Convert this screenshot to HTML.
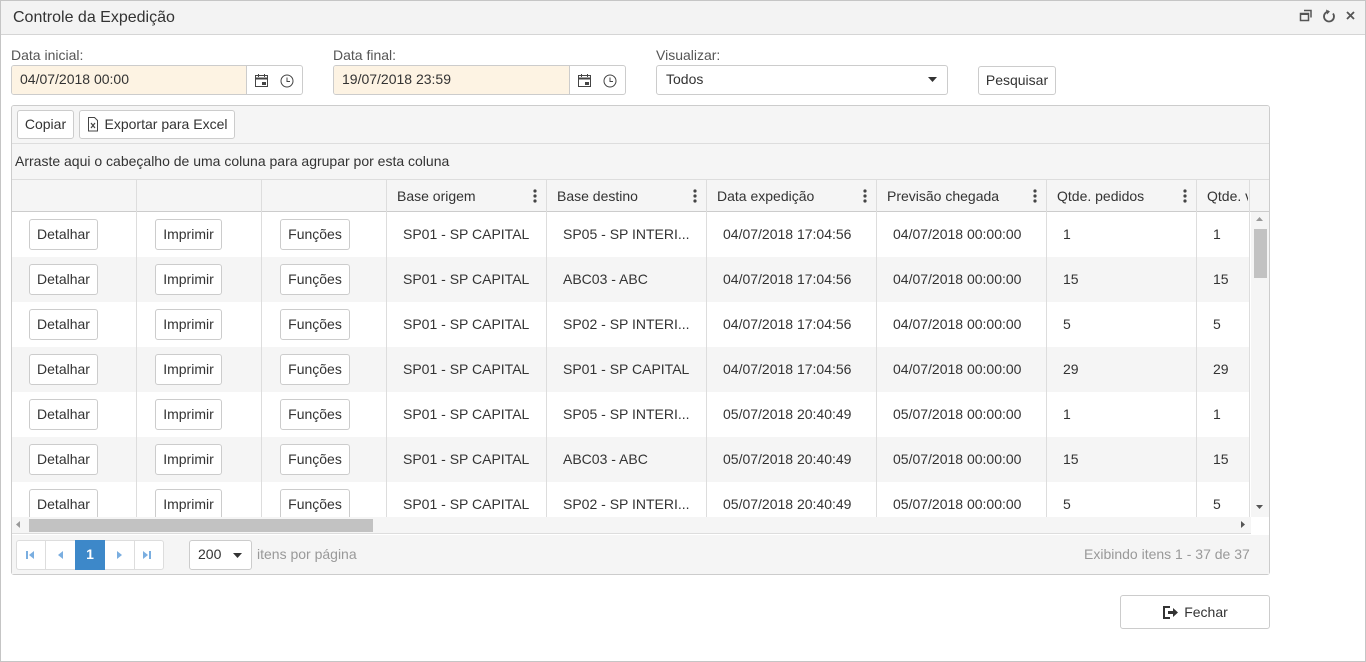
<!DOCTYPE html><html><head><meta charset="utf-8"><style>
*{box-sizing:border-box;margin:0;padding:0}
body{width:1366px;height:662px;font-family:"Liberation Sans",sans-serif;font-size:14px;color:#333;background:#fff;position:relative;overflow:hidden}
.abs{position:absolute}
.win{left:0;top:0;width:1366px;height:662px;border:1px solid #c5c5c5}
.title{left:1px;top:1px;width:1364px;height:34px;background:#f3f3f3;border-bottom:1px solid #d5d5d5;font-size:16px;padding:8px 0 0 12px;color:#333}
.lbl{font-size:14px;color:#555}
.inp{height:30px;border:1px solid #ccc;border-radius:3px;overflow:hidden}
.inp .v{position:absolute;left:0;top:0;bottom:0;background:#fdf3e3;padding:6px 0 0 8px;border-right:1px solid #ccc}
.btn{border:1px solid #ccc;border-radius:3px;background:#fff;text-align:center;font-size:14px;color:#333}
.grid{left:11px;top:105px;width:1259px;height:470px;border:1px solid #ccc;border-radius:3px;overflow:hidden;background:#fff}
.cell{position:absolute;font-size:14px;color:#333;white-space:nowrap}
</style></head><body>
<div class="abs win"></div>
<div class="abs title">Controle da Expedição</div>
<svg class="abs" style="left:1298px;top:8px" width="60" height="16" viewBox="0 0 60 16">
<rect x="2.5" y="5.5" width="8" height="7" fill="none" stroke="#555" stroke-width="1.5"/><rect x="2" y="5" width="9" height="2" fill="#555"/><path d="M6 2.5h7v7" fill="none" stroke="#555" stroke-width="1.5"/>
<path d="M31 3.5a5 5 0 1 0 4 2" fill="none" stroke="#555" stroke-width="1.8"/><path d="M28 1.5l4 2-3 3z" fill="#555"/>
<path d="M49 4l7 7M56 4l-7 7" stroke="#555" stroke-width="1.8"/></svg>

<div class="abs lbl" style="left:11px;top:47px">Data inicial:</div>
<div class="abs lbl" style="left:333px;top:47px">Data final:</div>
<div class="abs lbl" style="left:656px;top:47px">Visualizar:</div>
<div class="abs inp" style="left:11px;top:65px;width:292px"><div class="v" style="width:235px;padding-top:5px">04/07/2018 00:00</div>
<svg class="abs" style="left:241px;top:6px" width="50" height="18"><rect x="2.5" y="3.5" width="12" height="11" fill="none" stroke="#444"/><path d="M3 6.5h11" stroke="#444" stroke-width="2"/><rect x="9" y="10" width="4" height="3" fill="#444"/><path d="M5.5 2v3M11.5 2v3" stroke="#444"/><circle cx="34" cy="9" r="6" fill="none" stroke="#444"/><path d="M34 5.5v4h3" fill="none" stroke="#444"/></svg></div>
<div class="abs inp" style="left:333px;top:65px;width:293px"><div class="v" style="width:236px;padding-top:5px">19/07/2018 23:59</div>
<svg class="abs" style="left:242px;top:6px" width="50" height="18"><rect x="2.5" y="3.5" width="12" height="11" fill="none" stroke="#444"/><path d="M3 6.5h11" stroke="#444" stroke-width="2"/><rect x="9" y="10" width="4" height="3" fill="#444"/><path d="M5.5 2v3M11.5 2v3" stroke="#444"/><circle cx="34" cy="9" r="6" fill="none" stroke="#444"/><path d="M34 5.5v4h3" fill="none" stroke="#444"/></svg></div>
<div class="abs inp" style="left:656px;top:65px;width:292px;padding:5px 0 0 9px">Todos<svg class="abs" style="left:271px;top:11px" width="10" height="6"><path d="M0 0h9l-4.5 5z" fill="#333"/></svg></div>
<div class="abs btn" style="left:978px;top:66px;width:78px;height:29px;padding-top:5px">Pesquisar</div>

<div class="abs grid">
<div class="abs" style="left:0;top:0;width:1259px;height:38px;background:#f5f5f5;border-bottom:1px solid #ddd"></div>
<div class="abs btn" style="left:5px;top:4px;width:57px;height:29px;padding-top:5px">Copiar</div>
<div class="abs btn" style="left:67px;top:4px;width:156px;height:29px;padding-top:5px;padding-left:18px">Exportar para Excel<svg class="abs" style="left:7px;top:6px" width="12" height="15"><path d="M1.5 .5h6l3 3v10.5h-9z" fill="#fff" stroke="#444"/><path d="M4 6l4 5M8 6l-4 5" stroke="#444" stroke-width="1.2"/></svg></div>
<div class="abs" style="left:0;top:38px;width:1259px;height:36px;background:#f5f5f5;border-bottom:1px solid #ddd;padding:9px 0 0 3px;font-size:14px">Arraste aqui o cabeçalho de uma coluna para agrupar por esta coluna</div>
<div class="abs" style="left:0;top:74px;width:1259px;height:32px;background:#f5f5f5;border-bottom:1px solid #ccc"></div>
<div id="g"></div>
</div>

<script>
var g=document.getElementById('g'),h='';
var xs=[0,125,250,375,535,695,865,1035,1185,1238];
var hd=['','','','Base origem','Base destino','Data expedição','Previsão chegada','Qtde. pedidos','Qtde. v'];
for(var i=0;i<9;i++){var w=xs[i+1]-xs[i];
h+='<div class="abs" style="left:'+xs[i]+'px;top:74px;width:'+w+'px;height:32px;border-right:1px solid #ddd"></div>';
if(hd[i]){h+='<div class="cell" style="left:'+(xs[i]+10)+'px;top:82px;width:'+(w-12)+'px;overflow:hidden">'+hd[i]+'</div>';
if(i<8)h+='<svg class="abs" style="left:'+(xs[i]+w-14)+'px;top:82px" width="4" height="16"><circle cx="2" cy="3" r="1.6" fill="#444"/><circle cx="2" cy="8" r="1.6" fill="#444"/><circle cx="2" cy="13" r="1.6" fill="#444"/></svg>';}}
var rows=[['SP05 - SP INTERI...','04/07/2018 17:04:56','1'],['ABC03 - ABC','04/07/2018 17:04:56','15'],['SP02 - SP INTERI...','04/07/2018 17:04:56','5'],['SP01 - SP CAPITAL','04/07/2018 17:04:56','29'],['SP05 - SP INTERI...','05/07/2018 20:40:49','1'],['ABC03 - ABC','05/07/2018 20:40:49','15'],['SP02 - SP INTERI...','05/07/2018 20:40:49','5']];
for(var r=0;r<7;r++){var y=106+r*45;
h+='<div class="abs" style="left:0;top:'+y+'px;width:1238px;height:'+(r==6?305-y+106:45)+'px;background:'+(r%2?'#f5f5f5':'#fff')+';overflow:hidden">';
for(var i=0;i<9;i++)h+='<div class="abs" style="left:'+xs[i]+'px;top:0;width:'+(xs[i+1]-xs[i])+'px;height:45px;border-right:1px solid #ddd"></div>';
var b=[['Detalhar',17,69],['Imprimir',143,67],['Funções',268,70]];
b.forEach(function(q){h+='<div class="abs btn" style="left:'+q[1]+'px;top:7px;width:'+q[2]+'px;height:31px;padding-top:6px">'+q[0]+'</div>'});
var t=[['SP01 - SP CAPITAL',391],[rows[r][0],551],[rows[r][1],711],[(r<4?'04':'05')+'/07/2018 00:00:00',881],[rows[r][2],1051],[rows[r][2],1201]];
t.forEach(function(q){h+='<div class="cell" style="left:'+q[1]+'px;top:14px">'+q[0]+'</div>'});
h+='</div>';}
g.innerHTML=h;
</script>
<div class="abs" style="left:1251px;top:212px;width:18px;height:305px;background:#f5f5f5"></div>
<div class="abs" style="left:1254px;top:229px;width:13px;height:49px;background:#c2c2c2"></div>
<svg class="abs" style="left:1256px;top:217px" width="8" height="5"><path d="M0 4h7l-3.5-4z" fill="#999"/></svg>
<svg class="abs" style="left:1256px;top:505px" width="8" height="5"><path d="M0 0h7l-3.5 4z" fill="#555"/></svg>
<div class="abs" style="left:12px;top:517px;width:1239px;height:17px;background:#f5f5f5;border-bottom:1px solid #ddd"></div>
<div class="abs" style="left:29px;top:519px;width:344px;height:13px;background:#c2c2c2"></div>
<svg class="abs" style="left:16px;top:521px" width="5" height="8"><path d="M4 0v7l-4-3.5z" fill="#999"/></svg>
<svg class="abs" style="left:1241px;top:521px" width="5" height="8"><path d="M0 0v7l4-3.5z" fill="#555"/></svg>
<div class="abs" style="left:12px;top:535px;width:1257px;height:39px;background:#f5f5f5"></div>
<div class="abs" style="left:16px;top:540px;width:148px;height:30px;border:1px solid #ddd;border-radius:3px;background:#fff"></div>
<div class="abs" style="left:45px;top:540px;width:1px;height:30px;background:#ddd"></div>
<div class="abs" style="left:134px;top:540px;width:1px;height:30px;background:#ddd"></div>
<div class="abs" style="left:75px;top:540px;width:30px;height:30px;background:#3d88c9;color:#fff;font-weight:bold;text-align:center;padding-top:6px">1</div>
<svg class="abs" style="left:26px;top:550px" width="130" height="10"><path d="M0 1h2v8H0zM8 1v8L3 5z" fill="#7aaee0"/><path d="M37 1v8l-5-4z" fill="#7aaee0"/><path d="M91 1v8l5-4z" fill="#7aaee0"/><path d="M117 1v8l5-4zM123 1h2v8h-2z" fill="#7aaee0"/></svg>
<div class="abs" style="left:189px;top:540px;width:63px;height:30px;border:1px solid #ccc;border-radius:3px;background:#fff;padding:5px 0 0 8px">200<svg class="abs" style="left:43px;top:12px" width="10" height="6"><path d="M0 0h9l-4.5 5z" fill="#333"/></svg></div>
<div class="abs" style="left:257px;top:546px;color:#999">itens por página</div>
<div class="abs" style="left:1084px;top:546px;color:#999">Exibindo itens 1 - 37 de 37</div>
<div class="abs btn" style="left:1120px;top:595px;width:150px;height:34px;padding:8px 0 0 22px">Fechar<svg class="abs" style="left:42px;top:10px" width="16" height="13"><path d="M7 1H1v11h6" fill="none" stroke="#333" stroke-width="2"/><path d="M5 5h5V2l5 4.5-5 4.5V8H5z" fill="#333"/></svg></div>
</body></html>
